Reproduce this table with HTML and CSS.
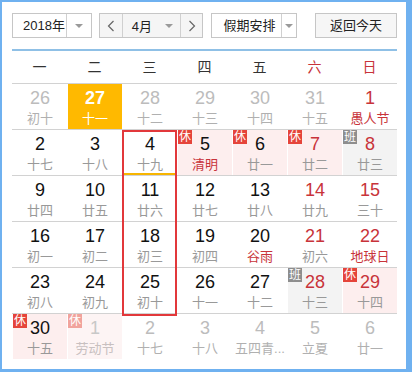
FILE: index.html
```html
<!DOCTYPE html>
<html lang="zh-CN">
<head>
<meta charset="utf-8">
<title>日历</title>
<link rel="stylesheet" href="styles.css">
</head>
<body>
<div class="frame">
  <div class="toolbar">
    <div class="sel year">
      <span class="sel-text">2018年</span>
      <span class="sel-arrow"><span class="tri"></span></span>
    </div>
    <div class="monthgroup">
      <span class="navbtn"><svg width="8" height="12" viewBox="0 0 8 12"><polyline points="6.5,1 1.5,6 6.5,11" fill="none" stroke="#666" stroke-width="1.2"/></svg></span>
      <span class="month"><span class="month-text">4月</span><span class="tri"></span></span>
      <span class="navbtn next"><svg width="8" height="12" viewBox="0 0 8 12"><polyline points="1.5,1 6.5,6 1.5,11" fill="none" stroke="#666" stroke-width="1.2"/></svg></span>
    </div>
    <div class="sel holiday">
      <span class="sel-text">假期安排</span>
      <span class="sel-arrow"><span class="tri"></span></span>
    </div>
    <div class="btn">返回今天</div>
  </div>

  <div class="weekhead">
    <span>一</span><span>二</span><span>三</span><span>四</span><span>五</span><span class="red">六</span><span class="red">日</span>
  </div>

  <div class="grid">
    <div class="week">
      <div class="c o"><span class="n">26</span><span class="l">初十</span></div>
      <div class="c today"><span class="n">27</span><span class="l">十一</span></div>
      <div class="c o"><span class="n">28</span><span class="l">十二</span></div>
      <div class="c o"><span class="n">29</span><span class="l">十三</span></div>
      <div class="c o"><span class="n">30</span><span class="l">十四</span></div>
      <div class="c o"><span class="n">31</span><span class="l">十五</span></div>
      <div class="c we"><span class="n">1</span><span class="l f">愚人节</span></div>
    </div>
    <div class="week">
      <div class="c"><span class="n">2</span><span class="l">十七</span></div>
      <div class="c"><span class="n">3</span><span class="l">十八</span></div>
      <div class="c sel-day"><span class="n">4</span><span class="l">十九</span></div>
      <div class="c rest"><span class="badge">休</span><span class="n">5</span><span class="l f">清明</span></div>
      <div class="c rest"><span class="badge">休</span><span class="n">6</span><span class="l">廿一</span></div>
      <div class="c rest we"><span class="badge">休</span><span class="n">7</span><span class="l">廿二</span></div>
      <div class="c work we"><span class="badge">班</span><span class="n">8</span><span class="l">廿三</span></div>
    </div>
    <div class="week">
      <div class="c"><span class="n">9</span><span class="l">廿四</span></div>
      <div class="c"><span class="n">10</span><span class="l">廿五</span></div>
      <div class="c"><span class="n">11</span><span class="l">廿六</span></div>
      <div class="c"><span class="n">12</span><span class="l">廿七</span></div>
      <div class="c"><span class="n">13</span><span class="l">廿八</span></div>
      <div class="c we"><span class="n">14</span><span class="l">廿九</span></div>
      <div class="c we"><span class="n">15</span><span class="l">三十</span></div>
    </div>
    <div class="week">
      <div class="c"><span class="n">16</span><span class="l">初一</span></div>
      <div class="c"><span class="n">17</span><span class="l">初二</span></div>
      <div class="c"><span class="n">18</span><span class="l">初三</span></div>
      <div class="c"><span class="n">19</span><span class="l">初四</span></div>
      <div class="c"><span class="n">20</span><span class="l f">谷雨</span></div>
      <div class="c we"><span class="n">21</span><span class="l">初六</span></div>
      <div class="c we"><span class="n">22</span><span class="l f">地球日</span></div>
    </div>
    <div class="week">
      <div class="c"><span class="n">23</span><span class="l">初八</span></div>
      <div class="c"><span class="n">24</span><span class="l">初九</span></div>
      <div class="c"><span class="n">25</span><span class="l">初十</span></div>
      <div class="c"><span class="n">26</span><span class="l">十一</span></div>
      <div class="c"><span class="n">27</span><span class="l">十二</span></div>
      <div class="c work we"><span class="badge">班</span><span class="n">28</span><span class="l">十三</span></div>
      <div class="c rest we"><span class="badge">休</span><span class="n">29</span><span class="l">十四</span></div>
    </div>
    <div class="week">
      <div class="c rest"><span class="badge">休</span><span class="n">30</span><span class="l">十五</span></div>
      <div class="c rest o faded"><span class="badge">休</span><span class="n">1</span><span class="l">劳动节</span></div>
      <div class="c o"><span class="n">2</span><span class="l">十七</span></div>
      <div class="c o"><span class="n">3</span><span class="l">十八</span></div>
      <div class="c o"><span class="n">4</span><span class="l">五四青...</span></div>
      <div class="c o"><span class="n">5</span><span class="l">立夏</span></div>
      <div class="c o"><span class="n">6</span><span class="l">廿一</span></div>
    </div>
    <div class="mark"></div>
  </div>
</div>
</body>
</html>
```

FILE: styles.css
```css
html, body {
  margin: 0;
  padding: 0;
  background: #fff;
}
.frame {
  box-sizing: border-box;
  width: 412px;
  height: 372px;
  border-style: solid;
  border-color: #6fb1f0;
  border-width: 2px 6px 3px 2px;
  padding: 11px 0 0 10px;
  font-family: "Liberation Sans", "Noto Sans CJK SC", sans-serif;
  color: #222;
  overflow: hidden;
}
.toolbar {
  display: flex;
  width: 385px;
  height: 25px;
  font-size: 13px;
}
.sel, .monthgroup, .btn {
  box-sizing: border-box;
  height: 25px;
  border: 1px solid #c6c6c6;
  display: flex;
  align-items: stretch;
  white-space: nowrap;
}
.sel { background: #fff; }
.sel-text {
  flex: 1;
  line-height: 23px;
  padding-left: 10px;
  color: #222;
  white-space: nowrap;
}
.sel-arrow {
  width: 24px;
  flex: none;
  border-left: 1px solid #d0d0d0;
  display: flex;
  align-items: center;
  justify-content: center;
}
.tri {
  width: 0;
  height: 0;
  border-left: 4px solid transparent;
  border-right: 4px solid transparent;
  border-top: 4px solid #9a9a9a;
}
.year { width: 80px; }
.monthgroup {
  width: 105px;
  margin-left: 7px;
  background: #f5f5f5;
}
.navbtn {
  width: 22px;
  display: flex;
  align-items: center;
  justify-content: center;
  border-right: 1px solid #d0d0d0;
}
.navbtn.next {
  border-right: 0;
  border-left: 1px solid #d0d0d0;
  width: 21px;
}
.month {
  flex: 1;
  display: flex;
  align-items: center;
  padding-left: 9px;
  padding-right: 7px;
}
.month-text { flex: 1; }
.holiday {
  width: 86px;
  margin-left: 8px;
}
.holiday .sel-text { padding-left: 11px; }
.holiday .sel-arrow { width: 14px; }
.btn {
  width: 82px;
  margin-left: 18px;
  background: #f6f6f6;
  justify-content: center;
  line-height: 23px;
  color: #222;
}
.weekhead {
  margin-top: 11px;
  width: 385px;
  border-top: 2px solid #8fc0e6;
  display: grid;
  grid-template-columns: repeat(7, 55px);
  height: 32px;
  line-height: 32px;
  text-align: center;
  font-size: 14px;
  color: #333;
}
.weekhead .red { color: #c8333a; }
.grid {
  position: relative;
  width: 385px;
}
.week {
  display: grid;
  grid-template-columns: repeat(7, 55px);
  border-top: 1px solid #d2d2d2;
  height: 45px;
}
.c {
  position: relative;
  box-sizing: border-box;
  border-left: 1px solid #fff;
  height: 45px;
  padding-top: 4px;
  text-align: center;
  display: flex;
  flex-direction: column;
  align-items: center;
}
.n {
  display: block;
  font-size: 18px;
  line-height: 20px;
  color: #111;
}
.l {
  display: block;
  font-size: 13px;
  line-height: 16px;
  margin-top: 3px;
  color: #999;
  white-space: nowrap;
}
.we .n { color: #c8333a; }
.l.f { color: #c8333a; }
.o .n { color: #bcbcbc; }
.o .l { color: #b0b0b0; }
.today { background: #ffb900; }
.today .n { color: #fff; font-weight: bold; }
.today .l { color: #fff; }
.rest { background: #fdeeee; }
.work { background: #f3f3f3; }
.badge {
  position: absolute;
  top: 0;
  left: 0;
  width: 14px;
  height: 14px;
  line-height: 14px;
  font-size: 12px;
  color: #fff;
  background: #e5443a;
  text-align: center;
}
.work .badge { background: #8e8e8e; }
.faded { background: #fdf4f4; }
.faded .badge { background: #f1a39c; }
.faded .n { color: #c8c8c8; }
.faded .l { color: #c8c0c0; }
.sel-day { box-shadow: inset 0 -2px 0 #f7b500; }
.mark {
  position: absolute;
  left: 110px;
  top: 47px;
  width: 55px;
  height: 186px;
  box-sizing: border-box;
  border: 2px solid #e2383b;
  pointer-events: none;
}
```
